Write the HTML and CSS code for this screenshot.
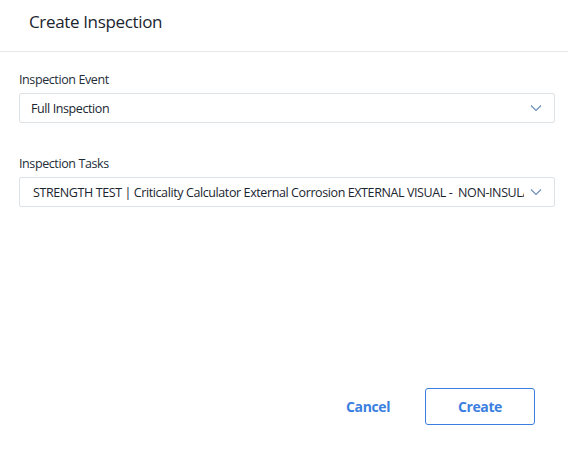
FILE: index.html
```html
<!DOCTYPE html>
<html>
<head>
<meta charset="utf-8">
<link rel="stylesheet" href="styles.css">
</head>
<body>
<div class="dialog">
  <header class="header">
    <h1 class="title">Create Inspection</h1>
  </header>
  <main class="content">
    <div class="field">
      <label class="label">Inspection Event</label>
      <div class="select">
        <span class="value value-event">Full Inspection</span>
        <svg class="chevron" width="12" height="8" viewBox="0 0 12 8"><path d="M1 1.5 L6 6.5 L11 1.5" fill="none" stroke="#6b8fb8" stroke-width="1.2"/></svg>
      </div>
    </div>
    <div class="field">
      <label class="label">Inspection Tasks</label>
      <div class="select">
        <span class="value value-tasks">STRENGTH TEST | Criticality Calculator External Corrosion EXTERNAL VISUAL -&nbsp; NON-INSULATED</span>
        <svg class="chevron" width="12" height="8" viewBox="0 0 12 8"><path d="M1 1.5 L6 6.5 L11 1.5" fill="none" stroke="#6b8fb8" stroke-width="1.2"/></svg>
      </div>
    </div>
  </main>
  <footer class="footer">
    <button class="btn btn-text">Cancel</button>
    <button class="btn btn-outline">Create</button>
  </footer>
</div>
</body>
</html>
```

FILE: styles.css
```css
* { box-sizing: border-box; }
html, body { margin: 0; padding: 0; background: #fff; }
body { font-family: "Open Sans", "Noto Sans", sans-serif; color: #1e2a36; }
.dialog { width: 568px; height: 469px; display: flex; flex-direction: column; }
.header { height: 52px; border-bottom: 1px solid #e8e8e8; padding: 0 29px; display: flex; align-items: center; }
.title { margin: 0; font-size: 17px; font-weight: 400; letter-spacing: -0.35px; color: #1a2530; padding-bottom: 8px; }
.content { padding: 20px 13px 0 19px; display: flex; flex-direction: column; gap: 33px; flex: 1; }
.field { display: flex; flex-direction: column; }
.label { font-size: 12.5px; letter-spacing: -0.4px; color: #232d38; line-height: 16px; margin-bottom: 5px; }
.select { height: 30px; border: 1px solid #dde2e6; border-radius: 2px; display: flex; align-items: center; padding: 0 12px 0 11px; }
.value { flex: 1; font-size: 12.5px; letter-spacing: -0.4px; color: #1a2530; white-space: nowrap; overflow: hidden; }
.value-tasks { padding-left: 2px; }
.chevron { flex: none; margin-left: 6px; }
.footer { display: flex; justify-content: flex-end; align-items: center; gap: 35px; padding: 0 33px 44px 0; }
.btn { font-family: inherit; font-size: 14px; font-weight: 700; letter-spacing: -0.4px; color: #3a7fe0; background: none; cursor: pointer; }
.btn-text { border: none; padding: 0; }
.btn-outline { width: 110px; height: 37px; border: 1.5px solid #3a7fe0; border-radius: 3px; }
```
